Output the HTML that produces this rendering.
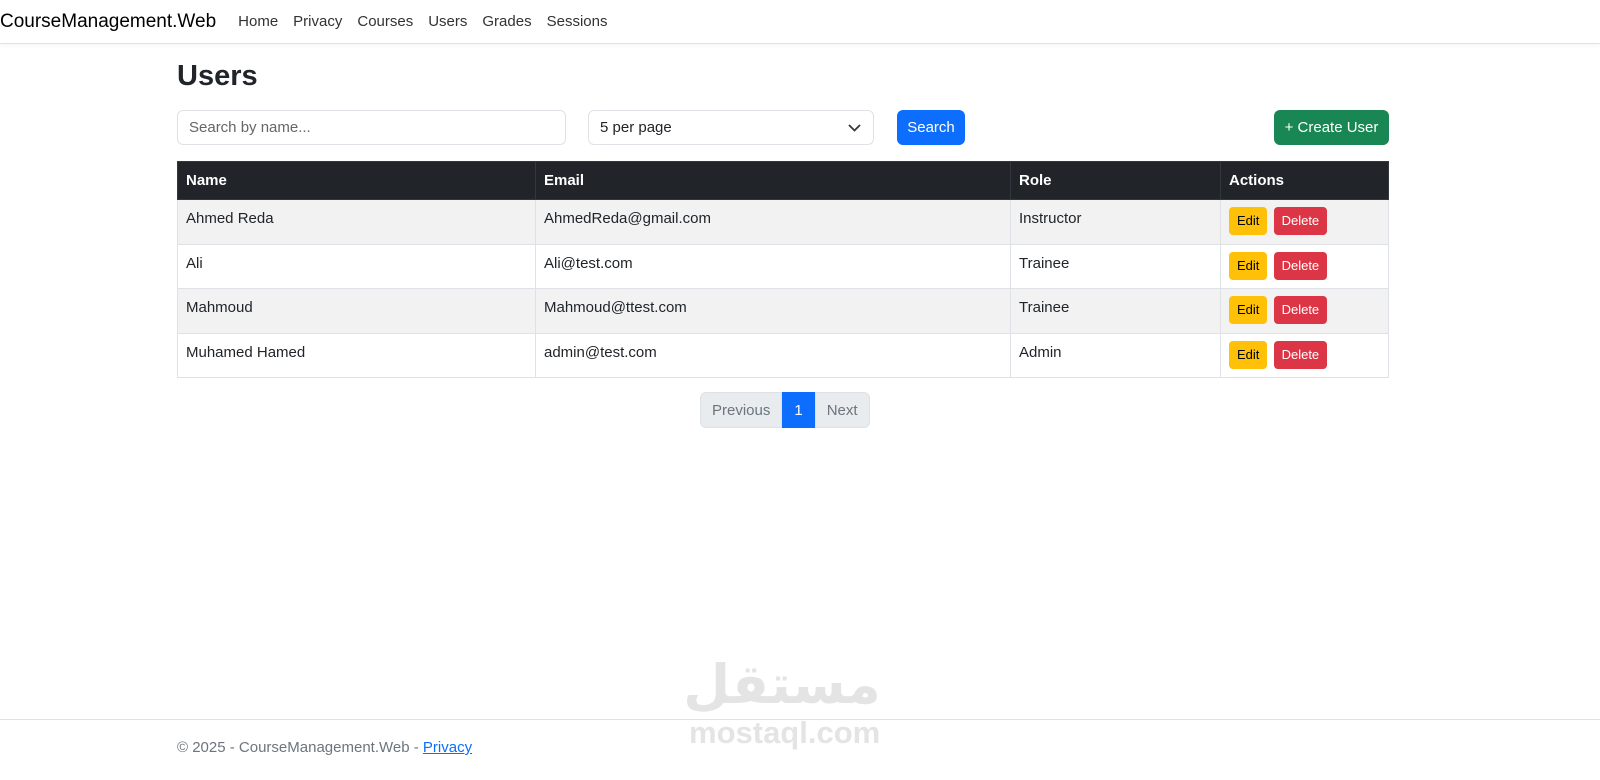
<!DOCTYPE html>
<html><head><meta charset="utf-8"><style>
*{box-sizing:border-box}
body{margin:0;width:1600px;height:780px;font-family:"Liberation Sans","DejaVu Sans",sans-serif;color:#212529;background:#fff;position:relative;overflow:hidden;font-size:15px}
.nav{height:44px;border-bottom:1px solid #dee2e6;box-shadow:0 2px 4px rgba(0,0,0,.04);display:flex;align-items:center}
.brand{font-size:19px;margin-left:0;margin-right:22px;color:#000}
.nav a{color:#333;text-decoration:none;margin-right:15px;font-size:15px}
h1{position:absolute;left:177px;top:60px;margin:0;font-size:29px;font-weight:bold}
.inp{position:absolute;top:110px;height:35px;border:1px solid #dee2e6;border-radius:6px;padding:0 11px;line-height:33px;color:#666;font-size:15px}
.btn{position:absolute;top:110px;height:35px;border-radius:6px;color:#fff;line-height:35px;text-align:center;font-size:15px}
table{position:absolute;left:177px;top:161px;width:1212px;border-collapse:collapse;font-size:15px}
th{background:#212529;color:#fff;text-align:left;height:38px;padding:0 8px;border:1px solid #32383e}
td{height:44.5px;padding:0 8px;border:1px solid #dee2e6;vertical-align:top;padding-top:10px}
tr.s td{background:#f2f2f2}
.e,.d{display:inline-block;font-size:13px;padding:0 8px;height:28px;line-height:28px;border-radius:4px;margin-top:-3px}
.e{background:#ffc107;color:#000}.d{background:#dc3545;color:#fff;margin-left:2px}
.pg{position:absolute;top:392px;left:700px;height:36px;display:flex;font-size:15px;line-height:36px}
.pg div{background:#e9ecef;color:#6c757d;padding:0 11px;border:1px solid #dee2e6}
</style></head><body>
<div class="nav"><span class="brand">CourseManagement.Web</span><a>Home</a><a>Privacy</a><a>Courses</a><a>Users</a><a>Grades</a><a>Sessions</a></div>
<h1>Users</h1>
<div class="inp" style="left:177px;width:389px">Search by name...</div>
<div class="inp" style="left:588px;width:286px;color:#212529">5 per page<svg style="position:absolute;right:12px;top:12px" width="13" height="10" viewBox="0 0 13 10"><path d="M1 2l5.5 5.5L12 2" fill="none" stroke="#343a40" stroke-width="1.8"/></svg></div>
<div class="btn" style="left:897px;width:68px;background:#0d6efd">Search</div>
<div class="btn" style="left:1274px;width:115px;background:#198754">+ Create User</div>
<table>
<tr><th style="width:358px">Name</th><th style="width:475px">Email</th><th style="width:210px">Role</th><th>Actions</th></tr>
<tr class="s"><td>Ahmed Reda</td><td>AhmedReda@gmail.com</td><td>Instructor</td><td><span class="e">Edit</span> <span class="d">Delete</span></td></tr>
<tr><td>Ali</td><td>Ali@test.com</td><td>Trainee</td><td><span class="e">Edit</span> <span class="d">Delete</span></td></tr>
<tr class="s"><td>Mahmoud</td><td>Mahmoud@ttest.com</td><td>Trainee</td><td><span class="e">Edit</span> <span class="d">Delete</span></td></tr>
<tr><td>Muhamed Hamed</td><td>admin@test.com</td><td>Admin</td><td><span class="e">Edit</span> <span class="d">Delete</span></td></tr>
</table>
<div class="pg"><div style="border-radius:6px 0 0 6px">Previous</div><div style="background:#0d6efd;color:#fff;border-color:#0d6efd">1</div><div style="border-radius:0 6px 6px 0">Next</div></div>
<div style="position:absolute;left:782px;top:650px;transform:translateX(-50%);font-family:'DejaVu Sans',sans-serif;font-size:54px;font-weight:bold;color:#e4e4e4;line-height:70px;white-space:nowrap">مستقل</div>
<div style="position:absolute;left:0;right:0;top:719px;border-top:1px solid #dee2e6"></div>
<div style="position:absolute;left:689px;top:713px;font-size:31px;font-weight:bold;color:#e4e4e4;line-height:40px">mostaql.com</div>
<div style="position:absolute;left:177px;top:739px;font-size:15px;color:#6c757d">© 2025 - CourseManagement.Web - <span style="color:#0d6efd;text-decoration:underline">Privacy</span></div>
</body></html>
